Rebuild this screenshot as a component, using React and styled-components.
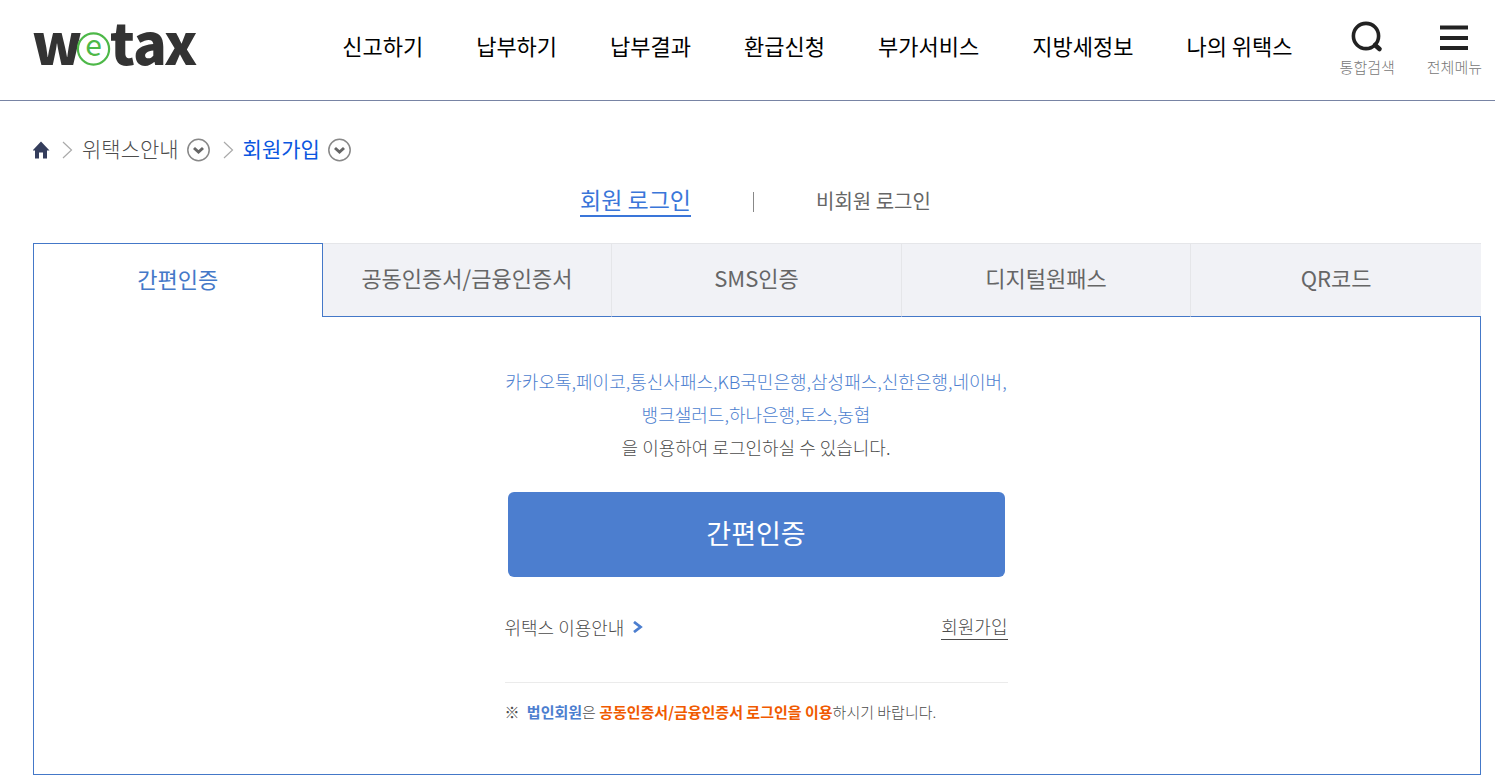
import React, { useState } from 'react';
import styled, { createGlobalStyle } from 'styled-components';

const GlobalStyle = createGlobalStyle`
    * {
        box-sizing: border-box;
    }
    body {
        margin: 0;
        background: #fff;
        color: #4c4c4c;
        font-family: "Noto Sans CJK KR", "Noto Sans", sans-serif;
        font-weight: 300;
    }
    a {
        color: inherit;
        text-decoration: none;
    }
    button {
        margin: 0;
        padding: 0;
        border: 0;
        background: none;
        color: inherit;
        font: inherit;
        cursor: pointer;
    }
`

const Header = styled.header`
    display: flex;
    align-items: center;
    justify-content: space-between;
    height: 101px;
    padding: 0 13px 6px 32px;
    border-bottom: 1px solid #7884a4;
`

const LogoLink = styled.a`
    display: block;
    svg {
        display: block;
        overflow: visible;
    }
    text {
        font-family: "Noto Sans CJK KR", sans-serif;
    }
`

const HeaderRight = styled.div`
    display: flex;
    align-items: center;
    gap: 47px;
`

const Nav = styled.nav`
    display: flex;
    gap: 53px;
    padding-bottom: 4px;
    a {
        color: #000;
        font-size: 22px;
        font-weight: 400;
        line-height: 32px;
        white-space: nowrap;
    }
`

const Tools = styled.div`
    display: flex;
    gap: 32px;
    padding-top: 4px;
`

const ToolButton = styled.button`
    display: flex;
    flex-direction: column;
    align-items: center;
    gap: 3px;
    color: #777;
    font-size: 15px;
    line-height: 22px;
    white-space: nowrap;
`

const Main = styled.main`
    padding: 36px 14px 9px 33px;
`

const Breadcrumb = styled.nav`
    display: flex;
    align-items: center;
    gap: 8px;
    height: 26px;
    font-size: 21px;
    line-height: 26px;
    svg {
        display: block;
    }
`

const Crumb = styled.a`
    padding-bottom: 4px;
    color: ${props => props.$current ? '#0a56e0' : '#4c4c4c'};
    font-weight: ${props => props.$current ? 400 : 300};
`

const LoginTypes = styled.div`
    display: flex;
    align-items: center;
    justify-content: center;
    gap: 62px;
    margin: 19px 0 25px;
    padding-right: 3px;
    height: 36px;
`

const LoginType = styled.a`
    padding: ${props => props.$active ? '0 0 1px' : '2px 0 0'};
    border-bottom: ${props => props.$active ? '2px solid #3a76d9' : '0'};
    color: ${props => props.$active ? '#3a76d9' : '#666'};
    font-size: ${props => props.$active ? 23 : 20}px;
    font-weight: 400;
    line-height: 30px;
`

const Divider = styled.span`
    width: 1px;
    height: 20px;
    margin-top: 4px;
    background: #888;
`

const Tabs = styled.div`
    display: grid;
    grid-template-columns: repeat(5, 1fr);
    height: 74px;
`

const Tab = styled.button`
    padding-bottom: 6px;
    border: 1px solid;
    border-color: ${props => props.$active
        ? '#4478c8 #4478c8 transparent'
        : '#e5e6e9 #e5e6e9 #4478c8 transparent'};
    border-width: ${props => props.$active ? '1px 1px 0' : '1px 1px 1px 0'};
    background: ${props => props.$active ? '#fff' : '#f1f2f6'};
    color: ${props => props.$active ? '#4478c8' : '#666'};
    font-size: 22px;
    font-weight: 400;
    line-height: 32px;
    &:last-child {
        border-right: 0;
    }
`

const Panel = styled.section`
    display: flex;
    justify-content: center;
    padding: 48px 22px 50px 20px;
    border: 1px solid #4478c8;
    border-top: 0;
`

const Content = styled.div`
    width: 100%;
    max-width: 503px;
`

const Guide = styled.p`
    margin: 0 0 28px;
    font-size: 18px;
    line-height: 33px;
    text-align: center;
    white-space: nowrap;
    span {
        color: #4c7ecf;
    }
`

const AuthButton = styled.button`
    display: block;
    width: calc(100% - 6px);
    height: 85px;
    margin: 0 auto;
    padding-bottom: 4px;
    border-radius: 6px;
    background: #4c7ecf;
    color: #fff;
    font-size: 27px;
    font-weight: 400;
`

const Links = styled.div`
    display: flex;
    align-items: center;
    justify-content: space-between;
    padding: 36px 0 42px;
    border-bottom: 1px solid #ebebeb;
    font-size: 18px;
    line-height: 26px;
`

const GuideLink = styled.a`
    display: flex;
    align-items: center;
    gap: 9px;
`

const JoinLink = styled.a`
    border-bottom: 1px solid #4c4c4c;
`

const Notice = styled.p`
    margin: 17px 0 0;
    font-size: 15px;
    line-height: 24px;
    white-space: nowrap;
    strong {
        margin-left: 4px;
        color: #4c7ecf;
        font-weight: 700;
    }
    em {
        color: #f05a00;
        font-style: normal;
        font-weight: 700;
    }
`

const menus = ['신고하기', '납부하기', '납부결과', '환급신청', '부가서비스', '지방세정보', '나의 위택스'];
const tabs = ['간편인증', '공동인증서/금융인증서', 'SMS인증', '디지털원패스', 'QR코드'];

const Logo = () => (
    <svg width="168" height="48" viewBox="0 0 168 48" role="img" aria-label="wetax">
        <g fill="#333" fontSize="56" fontWeight="900">
            <text x="0" y="42">w</text>
            <text x="78 101 132" y="42">tax</text>
        </g>
        <circle cx="61.5" cy="26" r="15.6" fill="#fff" stroke="#4db848" strokeWidth="2.2" />
        <text x="61.5" y="33" fill="#4db848" fontSize="30" fontWeight="400" textAnchor="middle">e</text>
    </svg>
);

const SearchIcon = () => (
    <svg width="32" height="32" viewBox="0 0 32 32" fill="none" stroke="#222">
        <circle cx="15" cy="15" r="12.6" strokeWidth="3.6" />
        <path d="M24 24l4.5 4" strokeWidth="4.6" strokeLinecap="round" />
    </svg>
);

const MenuIcon = () => (
    <svg width="28" height="32" viewBox="0 0 28 32" fill="#222">
        <path d="M0 4.5h28v4H0zM0 15h28v4H0zM0 25h28v4H0z" />
    </svg>
);

const HomeIcon = () => (
    <svg width="17" height="18" viewBox="1 0 17 18" fill="#343d5c">
        <path d="M9 0.5L17.5 9.5H15V17.5H11V11.5H7V17.5H3V9.5H0.5z" />
    </svg>
);

const Arrow = () => (
    <svg width="16" height="18" viewBox="0 0 16 18" fill="none" stroke="#aaa" strokeWidth="1.2">
        <path d="M5 1l8.5 8L5 17" />
    </svg>
);

const DropIcon = () => (
    <svg width="24" height="24" viewBox="0 0 24 24" fill="none">
        <circle cx="11.5" cy="12" r="10.7" stroke="#888" strokeWidth="1.5" />
        <path d="M7 10l4.5 4 4.5-4" stroke="#666" strokeWidth="3" />
    </svg>
);

const App = () => {
    const [active, setActive] = useState(0);

    return (
        <>
            <GlobalStyle />
            <Header>
                <LogoLink href="#"><Logo /></LogoLink>
                <HeaderRight>
                    <Nav>
                        {menus.map(menu => <a href="#" key={menu}>{menu}</a>)}
                    </Nav>
                    <Tools>
                        <ToolButton type="button"><SearchIcon />통합검색</ToolButton>
                        <ToolButton type="button"><MenuIcon />전체메뉴</ToolButton>
                    </Tools>
                </HeaderRight>
            </Header>
            <Main>
                <Breadcrumb aria-label="breadcrumb">
                    <a href="#" aria-label="홈"><HomeIcon /></a>
                    <Arrow />
                    <Crumb href="#">위택스안내</Crumb>
                    <button type="button" aria-label="위택스안내 메뉴"><DropIcon /></button>
                    <Arrow />
                    <Crumb href="#" $current>회원가입</Crumb>
                    <button type="button" aria-label="회원가입 메뉴"><DropIcon /></button>
                </Breadcrumb>
                <LoginTypes>
                    <LoginType href="#" $active>회원 로그인</LoginType>
                    <Divider />
                    <LoginType href="#">비회원 로그인</LoginType>
                </LoginTypes>
                <Tabs role="tablist">
                    {tabs.map((tab, i) => (
                        <Tab
                            type="button"
                            role="tab"
                            key={tab}
                            aria-selected={i === active}
                            $active={i === active}
                            onClick={() => setActive(i)}
                        >
                            {tab}
                        </Tab>
                    ))}
                </Tabs>
                <Panel role="tabpanel">
                    <Content>
                        <Guide>
                            <span>
                                카카오톡,페이코,통신사패스,KB국민은행,삼성패스,신한은행,네이버,<br />
                                뱅크샐러드,하나은행,토스,농협
                            </span><br />
                            을 이용하여 로그인하실 수 있습니다.
                        </Guide>
                        <AuthButton type="button">간편인증</AuthButton>
                        <Links>
                            <GuideLink href="#">
                                위택스 이용안내
                                <svg width="10" height="12" viewBox="0 0 10 12" fill="none" stroke="#4c7ecf" strokeWidth="2.8">
                                    <path d="M1 1l6.5 5L1 11" />
                                </svg>
                            </GuideLink>
                            <JoinLink href="#">회원가입</JoinLink>
                        </Links>
                        <Notice>
                            ※ <strong>법인회원</strong>은 <em>공동인증서/금융인증서 로그인을 이용</em>하시기 바랍니다.
                        </Notice>
                    </Content>
                </Panel>
            </Main>
        </>
    );
}

export default App
